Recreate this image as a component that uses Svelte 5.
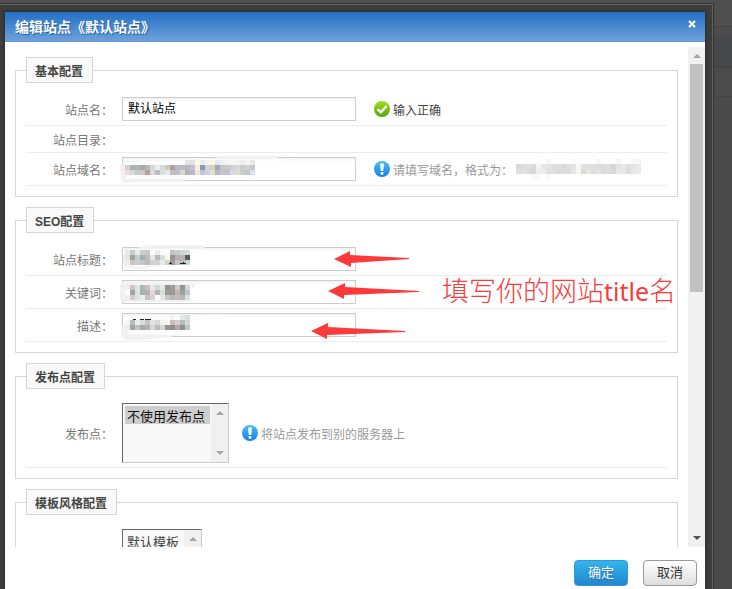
<script>
  const smudges = {
    domain: {
      cells: [
        '. . . . . . . . . . . . e3e4e6 dfe1e3 fdf6e8 e4ecf4 f4f4f2 fbf6e4 e6eaf2 eef0ee f5f5f5 f7f7f5 f4f4f4 eeeeee f6f6f6 e8e8ea',
        'e5cabf a5b6ba adb9b5 9faea6 b8b8b8 d6d8dc eceef0 d9dadc cbccbc ac9ea0 b8bcc2 bcbcbe b3bac2 c8bfc8 f8ecdc 8b98b0 cfd2da d8d4b8 a3a9b8 c3c8cc c4ccc2 cfcfcf d6d8da c9ccd2 cfd2cc c8c8ca',
        'eddcd6 cfdcd8 c8cac8 c9cbc8 b3a19e dcd8d8 bdbcc6 dddde3 e3eaf2 c2bcbe bfc0c6 dfd5d9 b6b2ba b9b8cc e4e6ee c9c5d2 cdd3dc dfdcdc b9b8be bfc5c8 c2c0d0 d9d7e6 dfdccc c8ccca c6c6c6 dae2ee'
      ],
      top: 3,
      edge: 'M-2 8 L4 4 L95 3 V-1 H156 V3 L63 20 V25 L14 25 L2 26 L-1 22Z',
      fill: 'M3 5 L95 2 L168 2 L162 7 L122 12 L130 20 L63 22 L4 22Z',
      marks: []
    },
    title: {
      cells: [
        'e8e8e6 cbcbca e6eae8 cbcbc9 c8c6c5 . e9eeee . . c6c2c0 c8c9c9 d1d7d0 d2d8de',
        'e3e5e0 a3a39c bdcbd2 a2b3ae c1bcbd e3e7e8 bbb8b9 d6dcda fbf8f2 989492 b6b1b2 bbb3ad 5b5b5a',
        'ededee c9c4c6 cfccca bec8c5 bdbabc d5cfce d3d1d3 e9eae8 d6d4cb a19d9d c8c2c6 b9bcb8 c9d2d8'
      ],
      top: 3,
      edge: 'M1 8 L15 1 L28 -2 L80 -2 L83 2 L70 5 L36 19 L20 22 L4 21 L1 17Z',
      fill: 'M3 5 L20 2 L83 2 L81 7 L70 8 L70 18 L36 18 L18 20 L5 18Z',
      marks: [[47, 16, 3], [58, 16, 6], [48, 15, 1], [61, 15, 1]]
    },
    keywords: {
      cells: [
        'f0f1ec ccc5c7 dfe4e2 a9bab5 c5c1c2 e9e9e8 cdd9dc e6e9e6 969290 a19c9b c5cac6 969492 d0d8da',
        'ffffff a3a29e dae4e7 a5b3b0 b8b1b3 e2d7d9 b9b5b5 d9ded9 a29b98 989a9f c9b4af a19f9f bac7cd',
        'efefe9 d2cdce dfe4e2 eaf0ec c7c2c4 d7d5d2 fafefe e8e8e5 c4c8c8 b8b8b5 bebfc0 b5b9b7 d8dfe1'
      ],
      top: 5,
      edge: 'M-2 5 L0 3 L30 3 L74 4 L70 9 L70 20 L76 21 L60 22 L2 22 L-2 19Z',
      fill: 'M4 6 L70 5 L70 20 L4 20Z',
      marks: []
    },
    desc: {
      cells: [
        '. . . . . . . . . f4f4f8 . e6eae5 d8e0e4',
        'f7f7f5 b9bdba e8eef0 d9dfdc c4c2c2 e5e2e0 d8dad8 f1f4f1 f9f7f2 c6c1be d5cfd2 b8bdb8 cfd5d8',
        'ecece8 a4a6a1 bfc6c5 a3aeaa b6b0b2 dbd5d6 bdbab9 d4d9d4 979593 8e8d8c b0aaab 918f8d bcc7cd'
      ],
      top: 2,
      edge: 'M-1 14 L6 10 L14 7 L60 18 L60 21 L48 24 L22 27 L4 27 L-1 23Z',
      fill: 'M6 9 L14 7 L60 3 L105 3 L112 6 L70 7 L70 19 L50 22 L6 21Z',
      marks: [[11, 6, 3], [18, 6, 4], [23, 6, 6]]
    }
  };

  const example = [
    '. . . . fbfbfb . f6f6f6 . . . . f9f9f9 . . . . f6f6f6 . . . f3f4f6 . . f8f8f8 f6f6f6',
    'd6d8de dddddd e7dcd6 d8dbe3 f4f4f4 e7e6e3 e3e5e8 dcdde0 e1dbda dadada e0dfe3 e0e2e2 f8f8f4 e2e3e4 e0e0e0 e2dfd4 d9dce0 e0dcda dfdfe3 d2d5da e4e4e5 eee8e2 e3dfdf e1e4e5 e9eaea',
    'dfdfe1 e2dfde e0d9d6 d5d6da f0efea e9eeee dedfe1 e2e0de dadadb dedfdd d9dce2 e6e7e8 f5f5f4 dbdbda e9e7de dedede e4e5e0 d9dcdf e0dddf d9d9d8 e8e9ea ece7dd dcdde4 e5e8e8 e9eaea',
    '. . . f9f9fa fbf9f4 . f8f8f9 . . . . . . . . . . . . . . . . . .'
  ];

  const toCells = (rows) =>
    rows.flatMap((row, y) =>
      row.split(' ').map((c, x) => ({ x, y, c })).filter((cell) => cell.c !== '.')
    );

  let siteName = $state('默认站点');
</script>

{#snippet smudge(s)}
  <svg class="smudge" viewBox="0 0 160 28" aria-hidden="true">
    <path d={s.edge} fill="#f1f1f1" />
    <path d={s.fill} fill="#fdfdfd" />
    {#each toCells(s.cells) as cell}
      <rect x={3 + cell.x * 5} y={s.top + cell.y * 5} width="5" height="5" fill={'#' + cell.c} />
    {/each}
    {#each s.marks as m}
      <rect x={m[0]} y={m[1]} width={m[2]} height="1" fill="#222" />
    {/each}
  </svg>
{/snippet}

{#snippet infoIcon()}
  <svg class="icon" viewBox="0 0 16 16" aria-hidden="true">
    <defs>
      <linearGradient id="blue" x1="0" y1="0" x2="0" y2="1">
        <stop offset="0" stop-color="#4dbdf8" />
        <stop offset="1" stop-color="#1380e6" />
      </linearGradient>
    </defs>
    <circle cx="8" cy="8" r="8" fill="url(#blue)" />
    <path d="M6 2.400h4L9.200 10H6.800Z" fill="#fff" />
    <rect x="6.500" y="11" width="3" height="2.700" rx="1" fill="#fff" />
  </svg>
{/snippet}

{#snippet listScroll(both)}
  <span class="list-scroll" aria-hidden="true">
    <svg viewBox="0 0 8 4"><path d="M0 4 4 0 8 4Z" /></svg>
    {#if both}<svg viewBox="0 0 8 4"><path d="M0 0 4 4 8 0Z" /></svg>{/if}
  </span>
{/snippet}

<div class="backdrop">
  <div class="frame">
    <div class="dialog" role="dialog" aria-labelledby="dialog-title">
      <header>
        <h1 id="dialog-title">编辑站点《默认站点》</h1>
        <button class="close" type="button" aria-label="关闭">
          <svg viewBox="0 0 8 8"><path d="M1 1 7 7M7 1 1 7" /></svg>
        </button>
      </header>

      <div class="body">
        <form id="site-form">
          <fieldset>
            <legend>基本配置</legend>
            <div class="rows">
              <div class="row">
                <label for="name">站点名：</label>
                <div class="field"><input id="name" type="text" bind:value={siteName} /></div>
                <p class="hint ok">
                  <svg class="icon" viewBox="0 0 16 16" aria-hidden="true">
                    <defs>
                      <linearGradient id="green" x1="0" y1="0" x2="0" y2="1">
                        <stop offset="0" stop-color="#a5de1c" />
                        <stop offset="1" stop-color="#4fa80c" />
                      </linearGradient>
                    </defs>
                    <circle cx="8" cy="8" r="8" fill="url(#green)" />
                    <path d="M3.6 8.2 6.8 11.3 12.6 5" fill="none" stroke="#fff" stroke-width="2.3" />
                  </svg>
                  <span>输入正确</span>
                </p>
              </div>
              <div class="row short"><span class="label">站点目录：</span></div>
              <div class="row">
                <label for="domain">站点域名：</label>
                <div class="field"><input id="domain" type="text" />{@render smudge(smudges.domain)}</div>
                <p class="hint">
                  {@render infoIcon()}
                  <span>请填写域名，格式为：</span>
                  <svg class="example" viewBox="0 0 125 20" aria-hidden="true">
                    {#each toCells(example) as cell}
                      <rect x={cell.x * 5} y={cell.y * 5} width="5" height="5" fill={'#' + cell.c} />
                    {/each}
                  </svg>
                </p>
              </div>
            </div>
          </fieldset>

          <fieldset>
            <legend>SEO配置</legend>
            <div class="rows">
              <div class="row">
                <label for="title">站点标题：</label>
                <div class="field"><input id="title" type="text" />{@render smudge(smudges.title)}</div>
              </div>
              <div class="row">
                <label for="keywords">关键词：</label>
                <div class="field"><input id="keywords" type="text" />{@render smudge(smudges.keywords)}</div>
              </div>
              <div class="row">
                <label for="desc">描述：</label>
                <div class="field"><input id="desc" type="text" />{@render smudge(smudges.desc)}</div>
              </div>
              <svg class="arrows" viewBox="308 243 120 100" aria-hidden="true">
                <path d="M334 259 350 251V255L409 258 409 259 351 263V267Z" />
                <path d="M328 291 345 283V287L419 291 419 292 344 295V299Z" />
                <path d="M311 331 328 323V327L405 331 405 332 327 335V339Z" />
              </svg>
              <p class="note">填写你的网站<span>title</span>名</p>
            </div>
          </fieldset>

          <fieldset>
            <legend>发布点配置</legend>
            <div class="rows">
              <div class="row">
                <label for="publish">发布点：</label>
                <div class="list">
                  <select id="publish" size="3">
                    <option selected>不使用发布点</option>
                  </select>
                  {@render listScroll(true)}
                </div>
                <p class="hint near">{@render infoIcon()} <span>将站点发布到别的服务器上</span></p>
              </div>
            </div>
          </fieldset>

          <fieldset>
            <legend>模板风格配置</legend>
            <div class="rows">
              <div class="row">
                <span class="label"></span>
                <div class="list narrow">
                  <select size="3" aria-label="模板风格配置">
                    <option>默认模板</option>
                  </select>
                  {@render listScroll(false)}
                </div>
              </div>
            </div>
          </fieldset>
        </form>

        <div class="scrollbar" aria-hidden="true">
          <svg viewBox="0 0 8 4"><path d="M0 4 4 0 8 4Z" fill="#a3a3a3" /></svg>
          <div class="track"><div class="thumb"></div></div>
          <svg viewBox="0 0 8 4"><path d="M0 0 4 4 8 0Z" fill="#505050" /></svg>
        </div>
      </div>

      <footer>
        <button class="primary" type="submit" form="site-form">确定</button>
        <button type="button">取消</button>
      </footer>
    </div>
  </div>
</div>

<style>
  :global(body) {
    background: #4a4a4a;
  }

  .backdrop,
  .backdrop :global(*) {
    box-sizing: border-box;
  }

  .backdrop {
    height: 100vh;
    min-height: 300px;
    padding: 3px 18px 0 0;
    overflow: hidden;
    font: 12px/18px "Liberation Sans", "Noto Sans CJK SC", sans-serif;
    background: linear-gradient(
      #4f4f4f 26px, #434343 26px, #434343 27px, #4c4c4c 27px, #4c4c4c 37px,
      #464749 37px, #464749 67px, #3e4044 67px, #3e4044 68px, #4b4b4b 68px,
      #4b4b4b 96px, #434343 96px, #434343 97px, #4a4a4a 97px
    );
  }

  .frame {
    height: 100%;
    padding: 8px 8px 0 5px;
    background: #3d3d3d;
    border: solid #333;
    border-width: 1px 1px 0 0;
    box-shadow: inset -1px 1px #626262;
  }

  .dialog {
    display: flex;
    flex-direction: column;
    height: 100%;
    background: #fff;
    box-shadow: 0 0 3px #222;
  }

  header {
    display: flex;
    align-items: center;
    justify-content: space-between;
    flex: none;
    height: 30px;
    padding: 0 5px 0 10px;
    background: linear-gradient(#2370c4, #6fa1da);
    border-bottom: 1px solid #6497d3;
  }

  h1 {
    margin: 0;
    font-size: 14px;
    line-height: 20px;
    color: #fff;
    text-shadow: 1px 1px 1px #1b5ca8;
  }

  .close {
    display: flex;
    padding: 4px;
    margin-bottom: 5px;
    background: none;
    border: 0;
  }

  .close svg {
    width: 8px;
    height: 8px;
    fill: none;
    stroke: #fff;
    stroke-width: 2;
  }

  .body {
    display: flex;
    flex: 1;
    min-height: 0;
    margin-top: 5px;
  }

  form {
    flex: 1;
    min-width: 0;
    padding: 10px;
    overflow: hidden;
  }

  fieldset {
    min-width: 0;
    padding: 0 10px 10px;
    margin: 0 0 10px;
    border: 1px solid #d6d6d6;
  }

  legend {
    height: 26px;
    padding: 2px 9px 0 8px;
    font-weight: bold;
    line-height: 24px;
    color: #444;
    background: #f9f9f9;
    border: 1px solid #d6d6d6;
  }

  .rows {
    position: relative;
    margin-top: 10px;
  }

  .row {
    display: flex;
    align-items: center;
    padding: 4px 0;
    border-bottom: 1px solid #ededed;
  }

  .short {
    height: 27px;
  }

  label,
  .label {
    flex: none;
    width: 96px;
    padding: 3px 9px 0 0;
    color: #777;
    text-align: right;
  }

  .field {
    position: relative;
    flex: none;
    width: 234px;
    height: 24px;
  }

  input {
    width: 100%;
    height: 24px;
    padding: 0 5px 3px;
    font: inherit;
    color: #000;
    background: linear-gradient(#f2f2f2, #fff 4px);
    border: 1px solid #cdcdcd;
  }

  .smudge {
    position: absolute;
    top: 0;
    left: 0;
    width: 160px;
    height: 28px;
    overflow: visible;
    pointer-events: none;
  }

  .hint {
    display: flex;
    align-items: center;
    gap: 3px;
    margin: 0 0 0 18px;
    color: #999;
    white-space: nowrap;
  }

  .hint span {
    padding-top: 3px;
  }

  .near {
    margin-left: 13px;
  }

  .ok {
    color: #444;
  }

  .icon {
    flex: none;
    width: 16px;
    height: 16px;
  }

  .example {
    width: 125px;
    height: 20px;
  }

  .arrows {
    position: absolute;
    top: 0;
    left: 282px;
    width: 120px;
    height: 100px;
    fill: #fc3a3a;
    pointer-events: none;
  }

  .note {
    position: absolute;
    top: 30px;
    left: 416px;
    margin: 0;
    font: 300 27px/36px "Open Sans", "Noto Sans CJK SC", sans-serif;
    color: #fc3a3a;
    white-space: nowrap;
  }

  .note span {
    font: 400 25px/36px "Noto Sans", sans-serif;
  }

  .list {
    position: relative;
    flex: none;
    width: 107px;
    height: 60px;
  }

  .narrow {
    width: 80px;
  }

  select {
    width: 100%;
    height: 100%;
    padding: 2px 18px 2px 2px;
    overflow: hidden;
    font: 13px/18px "Liberation Sans", "Noto Sans CJK SC", sans-serif;
    color: #444;
    background: #f8f8f8;
    border: 1px solid;
    border-color: #666 #ccc #ccc #666;
    border-radius: 0;
  }

  option {
    height: 18px;
    min-height: 18px;
    padding: 0 2px;
    line-height: 16px;
  }

  .list-scroll {
    position: absolute;
    inset: 1px 1px 1px auto;
    display: flex;
    flex-direction: column;
    align-items: center;
    justify-content: space-between;
    width: 17px;
    padding: 7px 0;
    background: #f0f0f0;
    fill: #a3a3a3;
  }

  .list-scroll svg,
  .scrollbar > svg {
    flex: none;
    width: 8px;
    height: 4px;
  }

  .scrollbar {
    display: flex;
    flex: none;
    flex-direction: column;
    align-items: center;
    width: 17px;
    padding: 7px 0;
    background: #f1f1f1;
  }

  .track {
    flex: 1;
    width: 13px;
    margin: 6px 0;
  }

  .thumb {
    height: 49%;
    background: #c1c1c1;
  }

  footer {
    display: flex;
    flex: none;
    gap: 15px;
    justify-content: flex-end;
    height: 42px;
    padding: 13px 8px 0;
  }

  footer button {
    width: 54px;
    height: 26px;
    padding: 0;
    font: inherit;
    font-size: 13px;
    color: #333;
    background: linear-gradient(#fff, #dedede);
    border: 1px solid #999;
    border-radius: 4px;
  }

  footer .primary {
    color: #fff;
    text-shadow: 0 1px 2px #1c6a91;
    background: linear-gradient(#34b5ee, #2387d0);
    border-color: #2c9bd8;
  }
</style>
